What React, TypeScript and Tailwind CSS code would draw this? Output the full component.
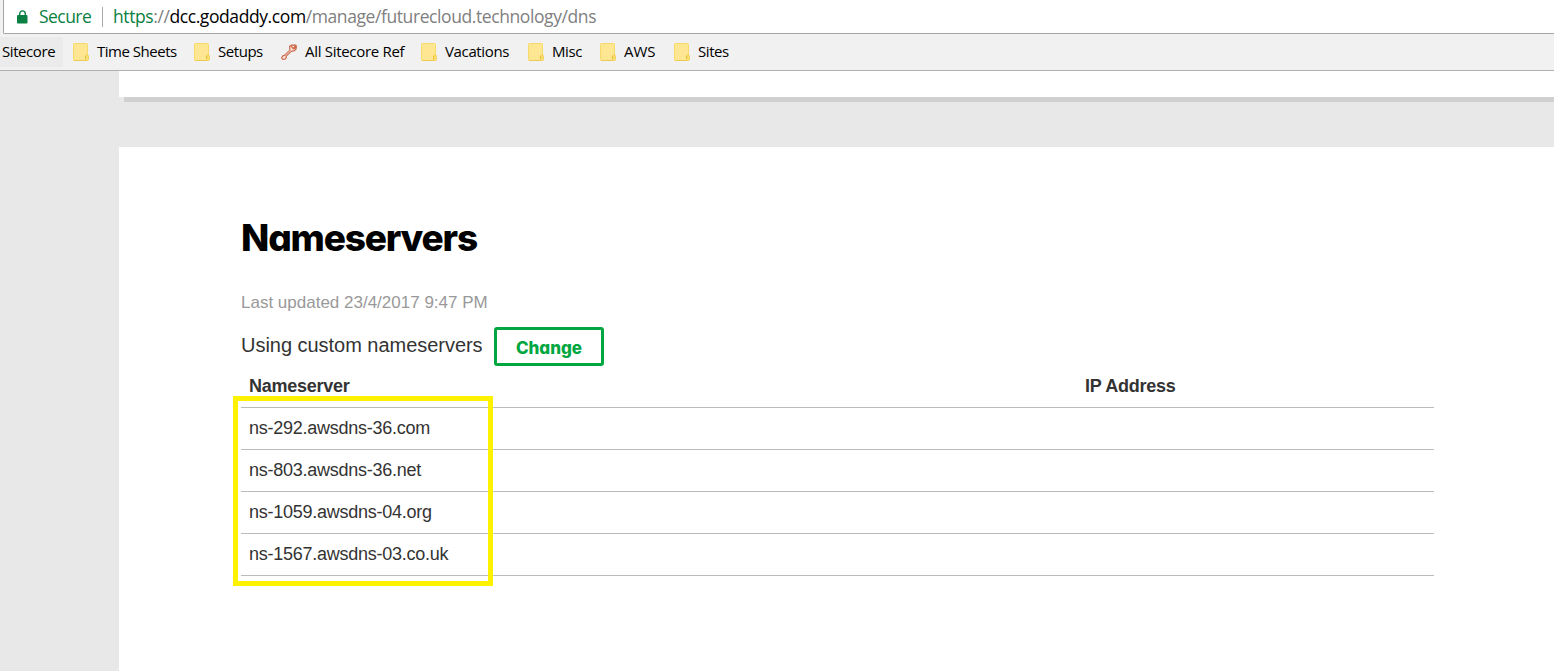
import React from "react";

const nameservers = [
  "ns-292.awsdns-36.com",
  "ns-803.awsdns-36.net",
  "ns-1059.awsdns-04.org",
  "ns-1567.awsdns-03.co.uk",
];

const bookmarks = [
  { label: "Time Sheets", icon: "folder", width: "w-[121px]", tracking: "tracking-[-0.48px]" },
  { label: "Setups", icon: "folder", width: "w-[87px]", tracking: "tracking-[-0.45px]" },
  { label: "All Sitecore Ref", icon: "key", width: "w-[140px]", tracking: "tracking-[-0.3px]" },
  { label: "Vacations", icon: "folder", width: "w-[107px]", tracking: "tracking-[-0.36px]" },
  { label: "Misc", icon: "folder", width: "w-[72px]", tracking: "tracking-[-0.38px]" },
  { label: "AWS", icon: "folder", width: "w-[74px]", tracking: "tracking-[0px]" },
  { label: "Sites", icon: "folder", width: "w-[60px]", tracking: "tracking-[-0.42px]" },
];

function LockIcon() {
  return (
    <svg width="11" height="14" viewBox="0 0 11 14" className="shrink-0">
      <path d="M2.7 6V3.7a2.8 2.8 0 0 1 5.6 0V6" fill="none" stroke="#0b8043" strokeWidth="1.4" />
      <rect x="0" y="5" width="10.5" height="8.5" rx="1" fill="#0b8043" />
    </svg>
  );
}

function FolderIcon() {
  return (
    <svg width="16" height="18" viewBox="0 0 16 18" className="shrink-0">
      <rect x="0.5" y="0.5" width="14" height="17" rx="0.8" fill="#ffe692" stroke="#f8da68" />
      <path d="M1 17.5h12" stroke="#eccb50" />
      <path d="M12.5 17V13.2q0-1.4 1.5-1.4t1.5 1.4V16q0 1.5-1.5 1.5h-1.5" fill="#ffe27c" stroke="#f2d15b" />
      <path d="M12.8 13.2v2.6" stroke="#e2b72d" />
    </svg>
  );
}

function KeyIcon() {
  return (
    <svg width="16" height="16" viewBox="0 0 16 16" className="shrink-0">
      <path
        d="M8.6 2.2 10.6 1h4.2l.6 1.5-.4 2.6-2 1.8-2.6.3-5.2 4.9.1 1.6-1.5 1.6H1.4l-.8-1.5 1.3-2 1.6-.4 5.4-5.3Z"
        fill="#f8dfd5"
        stroke="#c86446"
        strokeWidth="1.1"
      />
      <path d="M9.5 2.2 11 1.2h4v3.2l-2.8 1Z" fill="#d0694a" />
      <path d="M11.4 2.6h1.8" stroke="#fff" />
      <path d="m4.4 11 4.8-4.8" stroke="#e7a38e" strokeWidth="0.8" />
    </svg>
  );
}

function AddressBar() {
  return (
    <div className="flex h-[34px] bg-[#f1f1f1] pl-[3px]">
      <div className="flex flex-1 items-center rounded-bl-[2px] border-b border-l border-[#a5a5a5] bg-white pl-[13px] text-[17.5px] whitespace-nowrap">
        <LockIcon />
        <span className="ml-[11px] w-[63px] tracking-[-0.55px] text-[#0b8043]">Secure</span>
        <span className="h-5 w-px bg-[#a8a8a8]" />
        <span className="ml-[10px] tracking-[-0.41px] text-[#808080]">
          <span className="text-[#0b8043]">https</span>://<span className="text-black">dcc.godaddy.com</span>
          /manage/futurecloud.technology/dns
        </span>
      </div>
    </div>
  );
}

function BookmarksBar() {
  return (
    <div className="flex h-[37px] items-center border-b border-[#b1b1b1] bg-[#f1f1f1] text-[15px] whitespace-nowrap text-black">
      <div className="flex h-[30px] w-[63px] items-center bg-[#ebebeb] pb-[2px] pl-[2px] tracking-[-0.42px]">Sitecore</div>
      <div className="flex items-center pl-[10px]">
        {bookmarks.map((b) => (
          <div key={b.label} className={`flex items-center gap-2 ${b.width} ${b.tracking}`}>
            {b.icon === "key" ? <KeyIcon /> : <FolderIcon />}
            <span className="pb-[2px]">{b.label}</span>
          </div>
        ))}
      </div>
    </div>
  );
}

export default function App() {
  return (
    <div className="flex h-[671px] w-[1554px] flex-col overflow-hidden bg-[#e8e8e8] font-['Open_Sans','Noto_Sans',sans-serif]">
      <AddressBar />
      <BookmarksBar />
      <main className="flex flex-1 flex-col pl-[119px] font-['Liberation_Sans',Arial,sans-serif] text-[#333]">
        <div className="h-[26px] bg-white" />
        <div className="ml-[5px] h-[5px] bg-[#d0d0d0]" />
        <section className="mt-[45px] flex-1 bg-white pt-[66px] pr-[120px] pl-[122px]">
          <h1 className="h-[50px] font-['Inter',sans-serif] text-[37px] leading-[50px] font-[850] tracking-[-1.2px] whitespace-nowrap text-black [font-feature-settings:'cv11']">
            Nameservers
          </h1>
          <p className="mt-[30px] h-5 text-[17px] leading-5 whitespace-nowrap text-[#999]">Last updated 23/4/2017 9:47 PM</p>
          <div className="mt-[14px] flex h-[39px] items-start whitespace-nowrap">
            <span className="w-[253px] text-[20px] leading-9 tracking-[-0.03px]">Using custom nameservers</span>
            <button className="flex h-[39px] w-[110px] items-center justify-center rounded-[3px] border-3 border-[#00a63f] pt-[3px] font-['Inter',sans-serif] text-[17px] leading-5 font-extrabold text-[#00a63f] [font-feature-settings:'cv11']">
              Change
            </button>
          </div>
          <div className="relative text-[18px] leading-5 whitespace-nowrap">
            <div className="flex h-[42px] items-center border-b border-[#bbb] pb-[2px] pl-2 font-bold tracking-[-0.26px]">
              <span className="w-[836px]">Nameserver</span>
              <span>IP Address</span>
            </div>
            {nameservers.map((name) => (
              <div key={name} className="flex h-[42px] items-center border-b border-[#bbb] pb-[2px] pl-2 tracking-[-0.26px]">
                {name}
              </div>
            ))}
            <div className="absolute top-[30px] -left-2 h-[190px] w-[260px] border-5 border-[#fff200]" />
          </div>
        </section>
      </main>
    </div>
  );
}
